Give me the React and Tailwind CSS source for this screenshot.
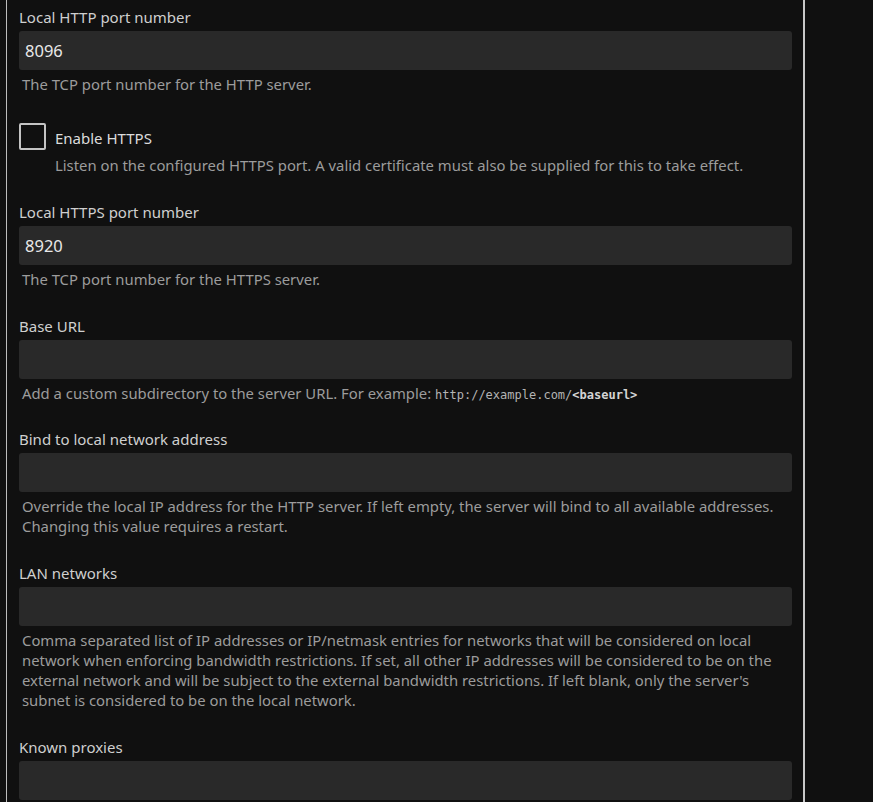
import React from 'react';

const font = { fontFamily: '"Noto Sans", sans-serif' };

function TextField({ label, value, children }) {
  return (
    <div className="mb-[26.75px]">
      <label className="block text-[15px] leading-[20px] text-[#cfcfcf]">{label}</label>
      <input
        readOnly
        value={value || ''}
        className="mt-[4px] block h-[39px] w-full rounded-[3px] bg-[#292929] px-[6px] text-[16.5px] text-[#e8e8e8] outline-none"
      />
      <div className="mt-[4px] pl-[3px] text-[14.85px] leading-[20px] text-[#9c9c9c]">{children}</div>
    </div>
  );
}

export default function App() {
  return (
    <div className="min-h-screen overflow-hidden bg-[#101010]" style={font}>
      <div className="ml-[6px] h-[802px] w-[799px] overflow-hidden border-l border-r-2 border-l-[#bdbdbd] border-r-[#c8c8c8] pl-[12px] pr-[11px] pt-[7px]">
        <TextField label="Local HTTP port number" value="8096">
          The TCP port number for the HTTP server.
        </TextField>

        <div className="mb-[27px] flex">
          <div className="mt-[2px] h-[27px] w-[27px] shrink-0 rounded-[2px] border-2 border-[#c4c4c4]" />
          <div className="ml-[9px]">
            <div className="pt-[7px] text-[15px] leading-[20px] text-[#dcdcdc]">Enable HTTPS</div>
            <div className="mt-[7px] text-[14.85px] leading-[20px] text-[#9c9c9c]">
              Listen on the configured HTTPS port. A valid certificate must also be supplied for this to take effect.
            </div>
          </div>
        </div>

        <TextField label="Local HTTPS port number" value="8920">
          The TCP port number for the HTTPS server.
        </TextField>

        <TextField label="Base URL">
          Add a custom subdirectory to the server URL. For example:{' '}
          <code className="text-[12px] leading-none text-[#b4b4b4]" style={{ fontFamily: '"DejaVu Sans Mono", monospace' }}>
            http://example.com/<b className="text-[#d4d4d4]">&lt;baseurl&gt;</b>
          </code>
        </TextField>

        <TextField label="Bind to local network address">
          Override the local IP address for the HTTP server. If left empty, the server will bind to all available addresses. Changing this value requires a restart.
        </TextField>

        <TextField label="LAN networks">
          Comma separated list of IP addresses or IP/netmask entries for networks that will be considered on local network when enforcing bandwidth restrictions. If set, all other IP addresses will be considered to be on the external network and will be subject to the external bandwidth restrictions. If left blank, only the server's subnet is considered to be on the local network.
        </TextField>

        <TextField label="Known proxies" />
      </div>
    </div>
  );
}
